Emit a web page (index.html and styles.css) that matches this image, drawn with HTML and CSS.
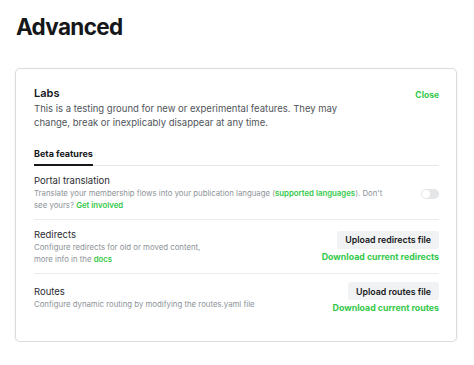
FILE: index.html
```html
<!DOCTYPE html>
<html lang="en">
<head>
<meta charset="utf-8">
<title>Advanced</title>
<link rel="stylesheet" href="styles.css">
</head>
<body>
<main class="page">
  <h1 class="page-title">Advanced</h1>
  <section class="card">
    <div class="card-head">
      <div class="card-head-text">
        <h2 class="card-title">Labs</h2>
        <p class="card-desc">This is a testing ground for new or experimental features. They may change, break or inexplicably disappear at any time.</p>
      </div>
      <a class="link link-close" href="#">Close</a>
    </div>
    <div class="tabs">
      <span class="tab tab-active">Beta features</span>
    </div>
    <div class="rows">
      <div class="row">
        <div class="row-text">
          <div class="row-title">Portal translation</div>
          <div class="row-desc">Translate your membership flows into your publication language (<a class="link" href="#">supported languages</a>). Don't see yours? <a class="link" href="#">Get involved</a></div>
        </div>
        <div class="row-actions">
          <span class="toggle"><span class="knob"></span></span>
        </div>
      </div>
      <div class="row">
        <div class="row-text">
          <div class="row-title">Redirects</div>
          <div class="row-desc">Configure redirects for old or moved content,<br>more info in the <a class="link" href="#">docs</a></div>
        </div>
        <div class="row-actions">
          <button class="btn" type="button">Upload redirects file</button>
          <a class="link link-action" href="#">Download current redirects</a>
        </div>
      </div>
      <div class="row">
        <div class="row-text">
          <div class="row-title">Routes</div>
          <div class="row-desc">Configure dynamic routing by modifying the routes.yaml file</div>
        </div>
        <div class="row-actions">
          <button class="btn" type="button">Upload routes file</button>
          <a class="link link-action" href="#">Download current routes</a>
        </div>
      </div>
    </div>
  </section>
</main>
</body>
</html>
```
FILE: styles.css
```css
* { box-sizing: border-box; }

html, body {
  margin: 0;
  padding: 0;
  background: #ffffff;
}

body {
  font-family: Inter, "Noto Sans", "Liberation Sans", sans-serif;
  color: #15171a;
}

.page {
  padding: 15px 17px 0 15px;
}

.page-title {
  margin: 0 0 29px 1px;
  font-size: 22.5px;
  line-height: 24px;
  font-weight: 700;
  letter-spacing: -0.03em;
}

.card {
  border: 1px solid #dcdcdc;
  border-radius: 5px;
  box-shadow: 0 1px 3px rgba(0, 0, 0, 0.08);
  padding: 17px 17px 19px 18px;
  height: 274px;
}

.card-head {
  display: flex;
  justify-content: space-between;
  align-items: flex-start;
}

.card-title {
  margin: 0;
  font-size: 11px;
  line-height: 14px;
  font-weight: 600;
}

.card-desc {
  margin: 2px 0 0;
  max-width: 310px;
  font-size: 9.5px;
  line-height: 14px;
  color: #50555b;
}

.link {
  color: #34c94a;
  font-weight: 600;
  text-decoration: none;
}

.link-close {
  margin-top: 3px;
  font-size: 8.5px;
  line-height: 12px;
  font-weight: 700;
}

.tabs {
  margin-top: 18px;
  display: flex;
  border-bottom: 1px solid #e6e6e6;
}

.tab {
  font-size: 9px;
  line-height: 12px;
  font-weight: 700;
  padding-bottom: 4px;
  margin-bottom: -1px;
}

.tab-active {
  border-bottom: 2px solid #15171a;
}

.row {
  display: flex;
  justify-content: space-between;
  align-items: center;
  padding: 8px 0;
  border-bottom: 1px solid #ebebeb;
}

.row:last-child {
  border-bottom: none;
}

.row-text {
  max-width: 355px;
}

.row-title {
  font-size: 9.5px;
  line-height: 13px;
  color: #2a2d31;
}

.row-desc {
  margin-top: 1px;
  font-size: 7.8px;
  line-height: 11.5px;
  color: #8e9399;
}

.row-actions {
  display: flex;
  flex-direction: column;
  align-items: flex-end;
  gap: 2px;
}

.toggle {
  display: block;
  width: 18px;
  height: 10px;
  border-radius: 5px;
  background: #e4e6e8;
  position: relative;
  margin-top: 3px;
}

.knob {
  position: absolute;
  left: 1px;
  top: 1px;
  width: 8px;
  height: 8px;
  border-radius: 50%;
  background: #ffffff;
}

.btn {
  font-family: inherit;
  font-size: 8.8px;
  font-weight: 600;
  color: #15171a;
  background: #f1f2f3;
  border: none;
  border-radius: 3px;
  height: 18px;
  padding: 0 8px;
}

.link-action {
  font-size: 8.8px;
  line-height: 12px;
  font-weight: 700;
}
```
